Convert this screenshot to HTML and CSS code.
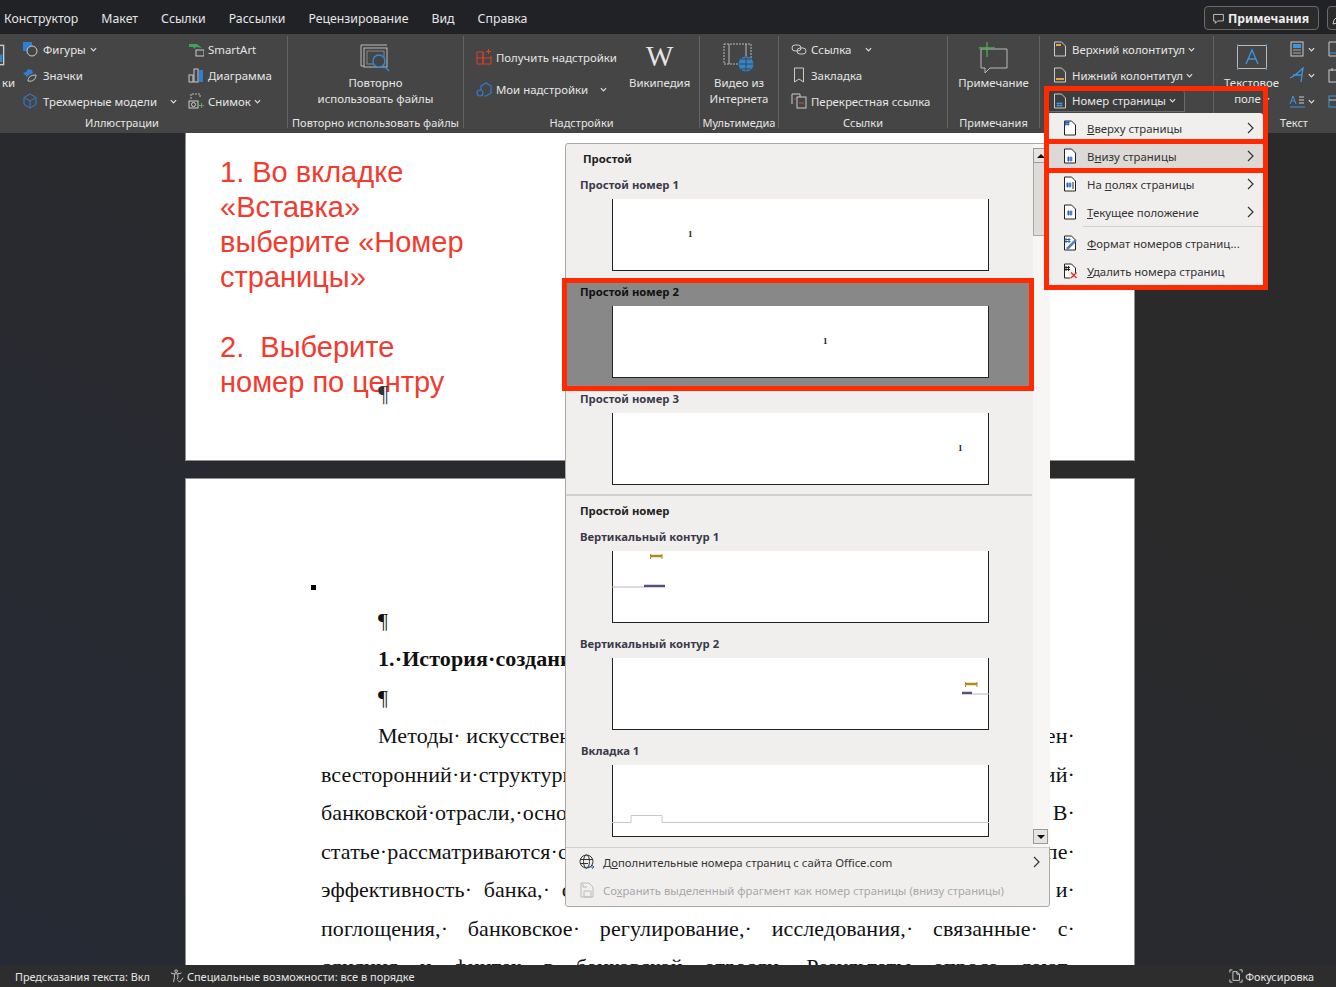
FILE: index.html
```html
<!DOCTYPE html>
<html lang="ru">
<head>
    <meta charset="UTF-8">
    <title>Номер страницы</title>
    <link rel="stylesheet" href="styles.css">
</head>
<body>
    <div class="tabs">
        <span class="tab tab-first">Конструктор</span>
        <span class="tab">Макет</span>
        <span class="tab">Ссылки</span>
        <span class="tab">Рассылки</span>
        <span class="tab">Рецензирование</span>
        <span class="tab">Вид</span>
        <span class="tab">Справка</span>
        <div class="tabs-right">
            <button class="notes-btn">
                <svg class="ic" viewBox="0 0 16 16"><path d="M2 3h12v8H7l-3 3v-3H2z" fill="none" stroke="#ddd"/></svg>
                Примечания
            </button>
            <button class="edit-btn">
                <svg class="ic" viewBox="0 0 16 16"><path d="M2 14l1-4 7-7 3 3-7 7z" fill="none" stroke="#ccc"/></svg>
            </button>
        </div>
    </div>

    <div class="ribbon">
        <div class="group group-ill">
            <div class="group-body">
                <div class="cut-col">
                    <svg class="ic-cut" viewBox="0 0 16 16"><rect x="1" y="1" width="14" height="14" fill="none" stroke="#ccc"/><path d="M6 13l8-6v6z" fill="#2e8bd8"/></svg>
                    <span>ки</span>
                </div>
                <div class="col col-ill1">
                    <div class="row">
                        <svg class="ic" viewBox="0 0 16 16"><rect x="1" y="1" width="9" height="9" fill="#2d7fd3"/><circle cx="10" cy="10" r="5" fill="#444" stroke="#ccc"/></svg>
                        <span>Фигуры</span><svg class="chev" viewBox="0 0 8 5"><path d="M1 1l3 3 3-3" /></svg>
                    </div>
                    <div class="row">
                        <svg class="ic" viewBox="0 0 16 16"><path d="M1 6l3-1 2-3 4 1 1 3-4 2-2 2z" fill="#2d7fd3"/><path d="M6 14c0-4 3-6 8-6 0 4-3 7-8 6z" fill="none" stroke="#ccc"/></svg>
                        <span>Значки</span>
                    </div>
                    <div class="row">
                        <svg class="ic" viewBox="0 0 16 16"><path d="M8 1l6 3.500v7L8 15l-6-3.500v-7zM2 4.500L8 8l6-3.500M8 8v7" fill="none" stroke="#2d7fd3"/></svg>
                        <span>Трехмерные модели</span><svg class="chev chev-far" viewBox="0 0 8 5"><path d="M1 1l3 3 3-3" /></svg>
                    </div>
                </div>
                <div class="col">
                    <div class="row">
                        <svg class="ic" viewBox="0 0 16 16"><path d="M1 3h8l5 4-6-1-2 2-1-2H1z" fill="#3aa655"/><rect x="8" y="9" width="8" height="6" fill="none" stroke="#ccc"/></svg>
                        <span>SmartArt</span>
                    </div>
                    <div class="row">
                        <svg class="ic" viewBox="0 0 16 16"><rect x="1" y="8" width="4" height="7" fill="none" stroke="#ccc"/><rect x="6" y="2" width="4" height="13" fill="none" stroke="#ccc"/><rect x="11" y="3" width="4" height="12" fill="#2d7fd3"/></svg>
                        <span>Диаграмма</span>
                    </div>
                    <div class="row">
                        <svg class="ic" viewBox="0 0 16 16"><path d="M3 6V1h9v4" fill="none" stroke="#bbb" stroke-dasharray="2 1"/><rect x="1" y="8" width="9" height="7" fill="none" stroke="#ccc"/><circle cx="5.500" cy="11.500" r="2" fill="none" stroke="#ccc"/><path d="M13.500 10v5M11 12.500h5" stroke="#4caf50"/></svg>
                        <span>Снимок</span><svg class="chev" viewBox="0 0 8 5"><path d="M1 1l3 3 3-3" /></svg>
                    </div>
                </div>
            </div>
            <div class="group-label">Иллюстрации</div>
        </div>

        <div class="group group-reuse">
            <div class="group-body group-center">
                <div class="big">
                    <svg class="ic-big" viewBox="0 0 32 32"><path d="M2 3h26M2 3v21h3" fill="none" stroke="#bbb"/><rect x="5" y="6" width="23" height="19" fill="none" stroke="#bbb"/><rect x="8" y="9" width="17" height="13" fill="none" stroke="#888"/><circle cx="20" cy="19" r="6" fill="#444" stroke="#2e8bd8" stroke-width="1.400"/><path d="M24 23l6 6" stroke="#2e8bd8" stroke-width="1.400"/></svg>
                    <span>Повторно</span>
                    <span>использовать файлы</span>
                </div>
            </div>
            <div class="group-label">Повторно использовать файлы</div>
        </div>

        <div class="group group-addins">
            <div class="group-body">
                <div class="col col-addins">
                    <div class="row row-tall">
                        <svg class="ic" viewBox="0 0 16 16"><path d="M1 3h6v12H1zM1 9h14M7 3v12h8V7" fill="none" stroke="#d8432a"/><path d="M12.500 0v5M10 2.500h5" stroke="#d8432a"/></svg>
                        <span>Получить надстройки</span>
                    </div>
                    <div class="row row-tall">
                        <svg class="ic" viewBox="0 0 16 16"><path d="M5 9V5l5-3 5 3v7l-5 3H8" fill="none" stroke="#2d7fd3" stroke-width="1.200"/><circle cx="4" cy="12" r="3" fill="none" stroke="#2d7fd3" stroke-width="1.200"/></svg>
                        <span>Мои надстройки</span><svg class="chev chev-far" viewBox="0 0 8 5"><path d="M1 1l3 3 3-3" /></svg>
                    </div>
                </div>
                <div class="big big-wiki">
                    <span class="wiki-w">W</span>
                    <span>Википедия</span>
                </div>
            </div>
            <div class="group-label">Надстройки</div>
        </div>

        <div class="group group-media">
            <div class="group-body group-center">
                <div class="big">
                    <svg class="ic-big" viewBox="0 0 32 32"><rect x="1" y="2" width="27" height="20" fill="none" stroke="#bbb" stroke-dasharray="2 1"/><path d="M6 2v20M23 2v13" stroke="#bbb"/><circle cx="23" cy="22" r="7.500" fill="#2e86cf"/><path d="M15.500 22h15M23 14.500v15M18 17h10M18 27h10" stroke="#444"/></svg>
                    <span>Видео из</span>
                    <span>Интернета</span>
                </div>
            </div>
            <div class="group-label">Мультимедиа</div>
        </div>

        <div class="group group-links">
            <div class="group-body">
                <div class="col col-links">
                    <div class="row">
                        <svg class="ic" viewBox="0 0 16 16"><rect x="1" y="4" width="9" height="6" rx="3" fill="none" stroke="#ccc"/><rect x="6" y="7" width="9" height="6" rx="3" fill="none" stroke="#ccc"/></svg>
                        <span>Ссылка</span><svg class="chev chev-link" viewBox="0 0 8 5"><path d="M1 1l3 3 3-3" /></svg>
                    </div>
                    <div class="row">
                        <svg class="ic" viewBox="0 0 16 16"><path d="M3.500 1h9v14l-4.500-3-4.500 3z" fill="none" stroke="#ccc"/></svg>
                        <span>Закладка</span>
                    </div>
                    <div class="row">
                        <svg class="ic" viewBox="0 0 16 16"><path d="M1 11V1h8v3" fill="none" stroke="#ccc"/><rect x="6" y="4" width="9" height="11" fill="none" stroke="#ccc"/><path d="M3 6h2M8 10h5" stroke="#e0453a"/></svg>
                        <span>Перекрестная ссылка</span>
                    </div>
                </div>
            </div>
            <div class="group-label">Ссылки</div>
        </div>

        <div class="group group-comment">
            <div class="group-body group-center">
                <div class="big">
                    <svg class="ic-big" viewBox="0 0 32 32"><path d="M3 7h26v19H12l-5 5v-5H3z" fill="none" stroke="#bbb"/><path d="M9 0v15M1 6h16" stroke="#4caf50" stroke-width="1.300"/></svg>
                    <span>Примечание</span>
                </div>
            </div>
            <div class="group-label">Примечания</div>
        </div>

        <div class="group group-header">
            <div class="group-body">
                <div class="col col-header">
                    <div class="row">
                        <svg class="ic" viewBox="0 0 16 16"><path d="M2.500 1h7l4 4v10h-11z" fill="none" stroke="#ccc"/><path d="M4 4h5" stroke="#e8a33d" stroke-width="2"/></svg>
                        <span>Верхний колонтитул</span><svg class="chev" viewBox="0 0 8 5"><path d="M1 1l3 3 3-3" /></svg>
                    </div>
                    <div class="row">
                        <svg class="ic" viewBox="0 0 16 16"><path d="M2.500 1h7l4 4v10h-11z" fill="none" stroke="#ccc"/><path d="M4 12h8" stroke="#e8a33d" stroke-width="2"/></svg>
                        <span>Нижний колонтитул</span><svg class="chev" viewBox="0 0 8 5"><path d="M1 1l3 3 3-3" /></svg>
                    </div>
                    <div class="row row-active">
                        <svg class="ic" viewBox="0 0 16 16"><path d="M2.500 1h7l4 4v10h-11z" fill="none" stroke="#ccc"/><path d="M6 9v5M9 9v5M4.500 10.500h6M4.500 12.500h6" stroke="#3d95e0"/></svg>
                        <span>Номер страницы</span><svg class="chev" viewBox="0 0 8 5"><path d="M1 1l3 3 3-3" /></svg>
                    </div>
                </div>
            </div>
        </div>

        <div class="group group-text">
            <div class="group-body">
                <div class="big big-textbox">
                    <svg class="ic-textbox" viewBox="0 0 32 26"><rect x="1.500" y="1.500" width="29" height="23" fill="none" stroke="#bbb"/><path d="M1 1h1M30 1h1M1 25h1M30 25h1" stroke="#3d95e0" stroke-width="3"/><path d="M10 20l6-14 6 14M12 15h8" fill="none" stroke="#3d95e0" stroke-width="1.300"/></svg>
                    <span>Текстовое</span>
                    <span class="field-label">поле<svg class="chev" viewBox="0 0 8 5"><path d="M1 1l3 3 3-3" /></svg></span>
                </div>
                <div class="col col-small">
                    <div class="row">
                        <svg class="ic" viewBox="0 0 16 16"><rect x="2" y="1" width="12" height="14" fill="none" stroke="#ccc"/><rect x="4" y="3" width="8" height="4" fill="#3d95e0"/><path d="M4 9h8M4 12h8" stroke="#aaa"/></svg>
                        <svg class="chev" viewBox="0 0 8 5"><path d="M1 1l3 3 3-3" /></svg>
                    </div>
                    <div class="row">
                        <svg class="ic" viewBox="0 0 16 16"><path d="M1 11C6 9 10 5 14 1l-2 14M4 8h9" fill="none" stroke="#3d95e0" stroke-width="1.300"/></svg>
                        <svg class="chev" viewBox="0 0 8 5"><path d="M1 1l3 3 3-3" /></svg>
                    </div>
                    <div class="row">
                        <svg class="ic" viewBox="0 0 16 16"><path d="M1 11l3-8 3 8M2 8h4M1 14h15" fill="none" stroke="#3d95e0"/><path d="M10 4h5M10 7h5M10 10h5" stroke="#ccc"/></svg>
                        <svg class="chev" viewBox="0 0 8 5"><path d="M1 1l3 3 3-3" /></svg>
                    </div>
                </div>
                <div class="col">
                    <div class="row"><svg class="ic" viewBox="0 0 16 16"><path d="M2 1h12v14H2z" fill="none" stroke="#ccc"/><path d="M2 12h12" stroke="#3d95e0"/></svg></div>
                    <div class="row"><svg class="ic" viewBox="0 0 16 16"><rect x="2" y="3" width="12" height="12" fill="none" stroke="#ccc"/><path d="M5 1v3M11 1v3" stroke="#ccc"/></svg></div>
                    <div class="row"><svg class="ic" viewBox="0 0 16 16"><rect x="2" y="3" width="12" height="11" fill="none" stroke="#3d95e0"/><path d="M2 7h12" stroke="#ccc"/></svg></div>
                </div>
            </div>
            <div class="group-label">Текст</div>
        </div>
    </div>

    <div class="workspace">
        <div class="page page-note">
            <div class="note">
                <div>1. Во вкладке</div>
                <div>«Вставка»</div>
                <div>выберите «Номер</div>
                <div>страницы»</div>
                <div>&nbsp;</div>
                <div>2.&nbsp; Выберите</div>
                <div>номер по центру</div>
            </div>
            <span class="note-mark">¶</span>
        </div>

        <div class="page page-text">
            <div class="line line-square"><span class="square"></span></div>
            <div class="line indent">¶</div>
            <div class="line indent"><b>1.·История·создания</b></div>
            <div class="line indent">¶</div>
            <div class="line indent split"><span>Методы· искусственного</span><span>ен·</span></div>
            <div class="line split"><span>всесторонний·и·структурированный</span><span>ий·</span></div>
            <div class="line split"><span>банковской·отрасли,·основное</span><span>В·</span></div>
            <div class="line split"><span>статье·рассматриваются·способы</span><span>пе·</span></div>
            <div class="line split wide"><span>эффективность· банка,· с</span><span>и·</span></div>
            <div class="line split"><span>поглощения,·</span><span>банковское·</span><span>регулирование,·</span><span>исследования,·</span><span>связанные·</span><span>с·</span></div>
            <div class="line split"><span>слияния·</span><span>и·</span><span>финтех·</span><span>в·</span><span>банковской·</span><span>отрасли.·</span><span>Результаты·</span><span>опроса·</span><span>дают·</span></div>
        </div>
    </div>

    <div class="status">
        <span>Предсказания текста: Вкл</span>
        <span class="status-access">
            <svg class="ic" viewBox="0 0 16 16"><circle cx="7" cy="2.500" r="1.500" fill="none" stroke="#ddd"/><path d="M1 4.500c3 1.500 9 1.500 12 0M5 6v4l-1 5M9 6v4l-1 2M9 13l2 2 4-5" fill="none" stroke="#ddd"/></svg>
            Специальные возможности: все в порядке
        </span>
        <span class="status-focus">
            <svg class="ic" viewBox="0 0 16 16"><path d="M1 4V1h3M12 1h3v3M1 12v3h3M12 15h3v-3" fill="none" stroke="#ddd"/><path d="M4.500 3h4.500l3 3v7H4.500zM9 3v3h3" fill="none" stroke="#ddd"/></svg>
            Фокусировка
        </span>
    </div>

    <!-- выпадающие панели поверх документа -->
    <div class="gallery">
        <div class="gallery-main">
            <div class="gallery-list">
                <div class="gallery-head">Простой</div>
                <div class="gallery-item">
                    <div class="item-label">Простой номер 1</div>
                    <div class="preview"><span class="pg pg-left">1</span></div>
                </div>
                <div class="gallery-item gallery-item-on">
                    <div class="item-label">Простой номер 2</div>
                    <div class="preview"><span class="pg pg-center">1</span></div>
                </div>
                <div class="gallery-item">
                    <div class="item-label">Простой номер 3</div>
                    <div class="preview"><span class="pg pg-right">1</span></div>
                </div>
                <div class="gallery-sep"></div>
                <div class="gallery-head gallery-head-sub">Простой номер</div>
                <div class="gallery-item">
                    <div class="item-label">Вертикальный контур 1</div>
                    <div class="preview">
                        <svg class="preview-art" viewBox="0 0 377 72"><path d="M38 5h12" stroke="#b08a1e" stroke-width="2.500"/><path d="M38.500 3v5M50 3v5" stroke="#b08a1e"/><path d="M0 36h33" stroke="#bdb2c8"/><path d="M32 35h21" stroke="#5c4a80" stroke-width="2.500"/></svg>
                    </div>
                </div>
                <div class="gallery-item">
                    <div class="item-label">Вертикальный контур 2</div>
                    <div class="preview">
                        <svg class="preview-art" viewBox="0 0 377 72"><path d="M353 26h12" stroke="#b08a1e" stroke-width="2.500"/><path d="M353.500 24v5M365 24v5" stroke="#b08a1e"/><path d="M360 36h17" stroke="#bdb2c8"/><path d="M350 35h10" stroke="#5c4a80" stroke-width="2.500"/></svg>
                    </div>
                </div>
                <div class="gallery-item">
                    <div class="item-label item-label-tab">Вкладка 1</div>
                    <div class="preview">
                        <svg class="preview-art" viewBox="0 0 377 72"><path d="M0 57.500h19v-7h31v7h327" fill="none" stroke="#c8c8c8"/></svg>
                    </div>
                </div>
            </div>
            <div class="scrollbar">
                <div class="scroll-top">
                    <div class="scroll-btn"><span class="tri-up"></span></div>
                    <div class="scroll-thumb"></div>
                </div>
                <div class="scroll-btn scroll-btn-down"><span class="tri-down"></span></div>
            </div>
        </div>
        <div class="gallery-foot">
            <div class="foot-row">
                <svg class="ic" viewBox="0 0 16 16"><circle cx="7.500" cy="7.500" r="6.500" fill="none" stroke="#333"/><ellipse cx="7.500" cy="7.500" rx="3" ry="6.500" fill="none" stroke="#333"/><path d="M1 5.500h13M1 9.500h8" stroke="#333"/><path d="M8 13h7M13 11l2 2-2 2" fill="none" stroke="#2d6fc2"/></svg>
                <span class="foot-text">Д<u>о</u>полнительные номера страниц с сайта Office.com</span>
                <svg class="menu-arrow" viewBox="0 0 7 12"><path d="M1 1l5 5-5 5"/></svg>
            </div>
            <div class="foot-row foot-row-off">
                <svg class="ic" viewBox="0 0 16 16"><path d="M2 1h8l4 4v10H2z" fill="none" stroke="#bbb"/><path d="M4 2v3h4M5 9h7v6H5z" fill="none" stroke="#bbb"/></svg>
                <span class="foot-text">Со<u>х</u>ранить выделенный фрагмент как номер страницы (внизу страницы)</span>
            </div>
        </div>
    </div>

    <div class="menu">
        <div class="menu-item">
            <svg class="ic" viewBox="0 0 16 16"><path d="M2.500 1h7l4 4v10h-11z" fill="#fff" stroke="#222"/><path d="M3.800 1v4.500M6.200 1v4.500M2.500 2.400h5M2.500 4.200h5" stroke="#1f62c4" stroke-width="1.200"/></svg>
            <span class="menu-text"><u>В</u>верху страницы</span>
            <svg class="menu-arrow" viewBox="0 0 7 12"><path d="M1 1l5 5-5 5"/></svg>
        </div>
        <div class="menu-item menu-item-on">
            <svg class="ic" viewBox="0 0 16 16"><path d="M2.500 1h7l4 4v10h-11z" fill="#fff" stroke="#222"/><path d="M6.500 8.500v5M9 8.500v5M5 10h5.500M5 12h5.500" stroke="#1f62c4" stroke-width="1.200"/></svg>
            <span class="menu-text">В<u>н</u>изу страницы</span>
            <svg class="menu-arrow" viewBox="0 0 7 12"><path d="M1 1l5 5-5 5"/></svg>
        </div>
        <div class="menu-item">
            <svg class="ic" viewBox="0 0 16 16"><path d="M2.500 1h7l4 4v10h-11z" fill="#fff" stroke="#222"/><path d="M5.500 6.500v5M8 6.500v5M4 8h5.500M4 10h5.500" stroke="#1f62c4" stroke-width="1.200"/><path d="M11 6v7" stroke="#222"/></svg>
            <span class="menu-text">На <u>п</u>олях страницы</span>
            <svg class="menu-arrow" viewBox="0 0 7 12"><path d="M1 1l5 5-5 5"/></svg>
        </div>
        <div class="menu-item">
            <svg class="ic" viewBox="0 0 16 16"><path d="M2.500 1h7l4 4v10h-11z" fill="#fff" stroke="#222"/><path d="M6.500 6.500v5M9 6.500v5M5 8h5.500M5 10h5.500" stroke="#1f62c4" stroke-width="1.200"/></svg>
            <span class="menu-text"><u>Т</u>екущее положение</span>
            <svg class="menu-arrow" viewBox="0 0 7 12"><path d="M1 1l5 5-5 5"/></svg>
        </div>
        <div class="menu-sep"></div>
        <div class="menu-item">
            <svg class="ic" viewBox="0 0 16 16"><path d="M2.500 1h7l4 4v10h-11z" fill="#fff" stroke="#222"/><path d="M4 3v5M7 3v5M2.500 4.500h6M2.500 6.500h6" stroke="#1f62c4"/><path d="M5 14l9-9" stroke="#5a7fb5" stroke-width="2.500"/></svg>
            <span class="menu-text"><u>Ф</u>ормат номеров страниц...</span>
        </div>
        <div class="menu-item">
            <svg class="ic" viewBox="0 0 16 16"><path d="M2.500 1h7l4 4v5M2.500 1v14h6" fill="#fff" stroke="#222"/><path d="M4 3v5M6.500 3v5M2.500 4.500h5.500M2.500 6.500h5.500" stroke="#222"/><path d="M9 9.500l5.500 5.500M14.500 9.500L9 15" stroke="#d8322a" stroke-width="1.400"/></svg>
            <span class="menu-text"><u>У</u>далить номера страниц</span>
        </div>
    </div>

    <div class="frame frame-menu"></div>
    <div class="frame frame-item"></div>
    <div class="frame frame-gallery"></div>
</body>
</html>
```

FILE: styles.css
```css
* {
    box-sizing: border-box;
}

html,
body {
    margin: 0;
    height: 100%;
}

body {
    width: 1336px;
    height: 987px;
    overflow: hidden;
    display: flex;
    flex-direction: column;
    font-family: "Noto Sans", Arial, sans-serif;
    font-size: 11.4px;
    color: #e6e6e6;
    background-color: #2a2a2b;
}

svg {
    display: block;
    flex: none;
}

.ic {
    width: 16px;
    height: 16px;
}

/* вкладки */
.tabs {
    height: 34px;
    flex: none;
    display: flex;
    align-items: center;
    background-color: #212226;
    font-size: 12.3px;
}

.tab {
    margin-right: 23px;
    padding-top: 3px;
}

.tab-first {
    margin-left: 4px;
}

.tabs-right {
    margin-left: auto;
    display: flex;
    gap: 8px;
    margin-right: -13px;
    padding-top: 2px;
}

.notes-btn,
.edit-btn {
    height: 24px;
    display: flex;
    align-items: center;
    gap: 3px;
    padding: 0 9px 0 7px;
    border: 1px solid #6a6a6a;
    border-radius: 4px;
    background-color: #2b2b2b;
    color: #eee;
    font: bold 12.2px "Noto Sans", Arial, sans-serif;
}

.notes-btn {
    width: 115px;
}

.notes-btn .ic {
    width: 13px;
    height: 13px;
}

.edit-btn {
    width: 22px;
    padding: 0 0 0 3px;
}

/* лента */
.ribbon {
    height: 99px;
    flex: none;
    display: flex;
    background-color: #454545;
    overflow: hidden;
    padding-top: 2px;
}

.group {
    flex: none;
    display: flex;
    flex-direction: column;
    height: 92px;
    border-right: 1px solid #636363;
}

.group-body {
    height: 78px;
    flex: none;
    display: flex;
}

.group-center {
    justify-content: center;
}

.group-label {
    text-align: center;
    line-height: 15px;
    padding-top: 1px;
    font-size: 11px;
    white-space: nowrap;
}

.group-ill {
    width: 331px;
    margin-left: -43px;
}

.group-reuse {
    width: 176px;
}

.group-addins {
    width: 236px;
}

.group-media {
    width: 79px;
}

.group-links {
    width: 169px;
}

.col-links {
    margin-left: 12px;
}

.group-comment {
    width: 92px;
}

.group-header {
    width: 174px;
}

.col-header {
    margin-left: 12px;
}

.group-text {
    width: 160px;
    border-right: none;
}

.col {
    flex: none;
    display: flex;
    flex-direction: column;
}

.row {
    height: 26px;
    display: flex;
    align-items: center;
    gap: 4px;
    white-space: nowrap;
}

.row-tall {
    height: 32px;
}

.row-active {
    width: 137px;
    height: 23px;
    margin: 1px 0 0 -4px;
    padding-left: 3px;
    background-color: #3d3d3d;
    border: 1px solid #6a6a6a;
    border-radius: 4px 4px 0 0;
}

.chev {
    width: 7px;
    height: 5px;
    margin-left: -1px;
}

.chev path {
    fill: none;
    stroke: #ddd;
    stroke-width: 1.400;
}

.chev-far {
    margin-left: 8px;
}

.chev-link {
    margin-left: 10px;
}

.cut-col {
    width: 58px;
    display: flex;
    flex-direction: column;
    align-items: flex-end;
    padding-top: 8px;
    margin-right: 7px;
}

.ic-cut {
    width: 22px;
    height: 22px;
    margin-right: 10px;
    margin-bottom: 9px;
}

.col-ill1 {
    width: 166px;
}

.col-ill1 .row {
    gap: 5px;
}

.big {
    display: flex;
    flex-direction: column;
    align-items: center;
    line-height: 16px;
    padding-top: 39px;
    position: relative;
    white-space: nowrap;
}

.ic-big {
    position: absolute;
    top: 6px;
    left: 50%;
    margin-left: -16px;
    width: 32px;
    height: 32px;
}

.col-addins {
    width: 149px;
    margin-left: 12px;
    padding-top: 5px;
}

.big-wiki {
    margin-left: 4px;
}

.wiki-w {
    position: absolute;
    top: 1px;
    left: 50%;
    transform: translateX(-50%);
    font: 29px/38px "Liberation Serif", serif;
    color: #e6e6e6;
}

.big-textbox {
    width: 75px;
}

.field-label {
    display: flex;
    align-items: center;
    gap: 3px;
    padding-left: 1px;
}

.ic-textbox {
    position: absolute;
    top: 8px;
    left: 22px;
    width: 32px;
    height: 26px;
}

.col-small {
    margin-right: 12px;
}

/* документ */
.workspace {
    flex: 1;
    min-height: 0;
    overflow: hidden;
    display: flex;
    flex-direction: column;
    align-items: center;
    padding-right: 16px;
    background: linear-gradient(30deg, #262a34 0%, #282a31 35%, #2a2a2b 70%);
}

.page {
    width: 948px;
    flex: none;
    background-color: #fff;
    box-shadow: 0 0 0 1px #8f8f8f;
}

.page-note {
    height: 327px;
    padding: 22px 0 0 34px;
    position: relative;
}

.note {
    font: 29px/35px "Liberation Sans", Arial, sans-serif;
    color: #f23b2f;
}

.note-mark {
    position: absolute;
    left: 192px;
    top: 246px;
    font: 23px/30px "Liberation Serif", serif;
    color: #333;
}

.page-text {
    margin-top: 19px;
    padding: 86px 59px 0 135px;
    height: 486px;
    font: 22px/38.500px "Liberation Serif", serif;
    letter-spacing: 0.1px;
    color: #111;
}

.line {
    height: 38.500px;
    white-space: nowrap;
}

.line-square {
    height: 16.500px;
}

.indent {
    padding-left: 57px;
}

.split {
    display: flex;
    justify-content: space-between;
}

.wide {
    word-spacing: 6px;
}

.square {
    display: block;
    width: 5px;
    height: 5px;
    margin: 20px 0 0 -10px;
    background-color: #000;
}

/* строка состояния */
.status {
    height: 22px;
    flex: none;
    display: flex;
    align-items: center;
    padding: 0 22px 0 15px;
    background-color: #2d2d2d;
    font-size: 10.800px;
    white-space: nowrap;
}

.status-access {
    display: flex;
    align-items: center;
    gap: 3px;
    margin-left: 20px;
    font-size: 11px;
}

.status .ic {
    width: 14px;
    height: 14px;
}

.status-focus {
    margin-left: auto;
    display: flex;
    align-items: center;
    gap: 2px;
}

/* галерея номеров */
.gallery {
    position: absolute;
    left: 565px;
    top: 143px;
    width: 485px;
    height: 764px;
    display: flex;
    flex-direction: column;
    background-color: #f1efee;
    border: 1px solid #a9a9a9;
    border-radius: 3px;
    color: #333;
    font-size: 11.300px;
}

.gallery-main {
    flex: none;
    height: 703px;
    display: flex;
}

.gallery-list {
    width: 466px;
    flex: none;
}

.gallery-head {
    height: 29px;
    line-height: 30px;
    padding-left: 17px;
    font-weight: bold;
    color: #222;
}

.gallery-head-sub {
    padding-left: 14px;
}

.gallery-sep {
    height: 2px;
    background-color: #d2d0ce;
}

.gallery-item {
    height: 107px;
}

.gallery-item-on {
    background-color: #888;
}

.gallery-item-on .item-label {
    color: #111;
}

.item-label {
    height: 26px;
    line-height: 24px;
    padding-left: 14px;
    font-weight: bold;
    color: #3a3a4a;
}

.item-label-tab {
    padding-left: 15px;
}

.preview {
    width: 377px;
    height: 72px;
    margin-left: 46px;
    display: flex;
    align-items: center;
    position: relative;
    background-color: #fff;
    border: 1.500px solid #222;
    border-top: none;
}

.pg {
    margin-bottom: 2px;
    font: bold 9px/10px "Liberation Serif", serif;
    color: #222;
}

.pg-left {
    margin-left: 75px;
}

.pg-center {
    margin-left: 210px;
}

.pg-right {
    margin-left: 345px;
}

.preview-art {
    position: absolute;
    left: -1px;
    top: 0;
    width: 377px;
    height: 72px;
}

.scrollbar {
    width: 17px;
    flex: none;
    margin-left: 1px;
    display: flex;
    flex-direction: column;
    justify-content: space-between;
    padding-top: 4px;
    background-color: #f7f6f5;
}

.scroll-btn {
    width: 15px;
    height: 15px;
    display: flex;
    align-items: center;
    justify-content: center;
    border: 1px solid #9a9a9a;
    background-color: #e6e4e2;
}

.scroll-btn-down {
    margin-bottom: 3px;
}

.scroll-thumb {
    width: 15px;
    height: 73px;
    background-color: #dedbd9;
    border: 1px solid #a8a8a8;
    border-top: none;
}

.tri-up {
    border: 4px solid transparent;
    border-top: none;
    border-bottom: 4px solid #111;
}

.tri-down {
    border: 4px solid transparent;
    border-bottom: none;
    border-top: 4px solid #111;
}

.gallery-foot {
    flex: 1;
    border-top: 1px solid #d2d0ce;
}

.foot-row {
    height: 28px;
    display: flex;
    align-items: center;
    padding-left: 13px;
}

.foot-text {
    margin-left: 8px;
}

.foot-row-off {
    color: #a8a8a8;
}

.foot-row .menu-arrow {
    margin-left: auto;
    margin-right: 9px;
}

/* меню номера страницы */
.menu {
    position: absolute;
    left: 1047px;
    top: 113px;
    width: 216px;
    height: 174px;
    padding-top: 1px;
    background-color: #f1efee;
    border-radius: 3px;
    color: #333;
}

.menu-item {
    height: 28px;
    display: flex;
    align-items: center;
    padding-left: 15px;
}

.menu-item-on {
    background-color: #dcd9d6;
}

.menu-text {
    margin-left: 9px;
}

.menu-sep {
    height: 1px;
    margin: 0 0 2px 36px;
    background-color: #d2d0ce;
}

.menu-arrow {
    width: 7px;
    height: 12px;
    margin-left: auto;
    margin-right: 9px;
}

.menu-arrow path {
    fill: none;
    stroke: #333;
    stroke-width: 1.200;
}

/* красные рамки аннотации */
.frame {
    position: absolute;
    border: 5px solid #ff2a00;
}

.frame-menu {
    left: 1044px;
    top: 86px;
    width: 224px;
    height: 204px;
}

.frame-item {
    left: 1044px;
    top: 139px;
    width: 224px;
    height: 34px;
    border-left: none;
    border-right: none;
}

.frame-gallery {
    left: 562px;
    top: 278px;
    width: 472px;
    height: 113px;
}
```
